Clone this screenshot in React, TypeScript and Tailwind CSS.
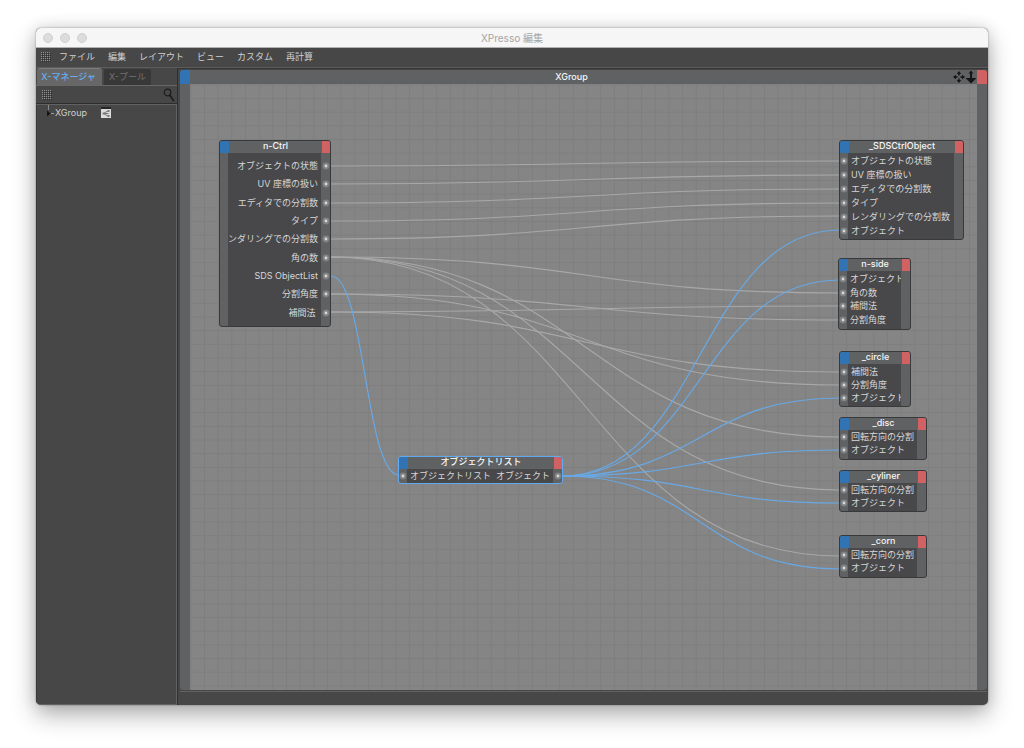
import React from 'react';
import { clsx } from 'clsx';

interface Port {
  label: string;
  side: 'in' | 'out';
}

interface GraphNode {
  id: string;
  title: string;
  place: string;
  rows: Port[][];
  rowsClass: string;
  selected?: boolean;
}

const input = (label: string): Port[] => [{ label, side: 'in' }];
const output = (label: string): Port[] => [{ label, side: 'out' }];

const MENU = ['ファイル', '編集', 'レイアウト', 'ビュー', 'カスタム', '再計算'];

const NODES: GraphNode[] = [
  {
    id: 'ctrl',
    title: 'n-Ctrl',
    place: 'left-[39px] top-[70px] w-[112px] h-[187px]',
    rowsClass: 'py-1',
    rows: [
      'オブジェクトの状態',
      'UV 座標の扱い',
      'エディタでの分割数',
      'タイプ',
      'レンダリングでの分割数',
      '角の数',
      'SDS ObjectList',
      '分割角度',
      '補間法 ',
    ].map(output),
  },
  {
    id: 'list',
    title: 'オブジェクトリスト',
    place: 'left-[218px] top-[386px] w-[165px] h-[28px]',
    rowsClass: '',
    selected: true,
    rows: [[{ label: 'オブジェクトリスト', side: 'in' }, { label: 'オブジェクト', side: 'out' }]],
  },
  {
    id: 'sds',
    title: '_SDSCtrlObject',
    place: 'left-[659px] top-[70px] w-[125px] h-[100px]',
    rowsClass: 'py-px',
    rows: [
      'オブジェクトの状態',
      'UV 座標の扱い',
      'エディタでの分割数',
      'タイプ',
      'レンダリングでの分割数',
      'オブジェクト',
    ].map(input),
  },
  {
    id: 'nside',
    title: 'n-side',
    place: 'left-[658px] top-[188px] w-[73px] h-[72px]',
    rowsClass: 'pt-px pb-0.5',
    rows: ['オブジェクト', '角の数', '補間法', '分割角度'].map(input),
  },
  {
    id: 'circle',
    title: '_circle',
    place: 'left-[659px] top-[281px] w-[72px] h-[56px]',
    rowsClass: 'py-px',
    rows: ['補間法', '分割角度', 'オブジェクト'].map(input),
  },
  {
    id: 'disc',
    title: '_disc',
    place: 'left-[659px] top-[347px] w-[88px] h-[43px]',
    rowsClass: 'pb-0.5',
    rows: ['回転方向の分割', 'オブジェクト'].map(input),
  },
  {
    id: 'cyliner',
    title: '_cyliner',
    place: 'left-[659px] top-[400px] w-[88px] h-[42px]',
    rowsClass: 'pb-0.5',
    rows: ['回転方向の分割', 'オブジェクト'].map(input),
  },
  {
    id: 'corn',
    title: '_corn',
    place: 'left-[659px] top-[465px] w-[88px] h-[43px]',
    rowsClass: 'pb-0.5',
    rows: ['回転方向の分割', 'オブジェクト'].map(input),
  },
];

// [x1, y1, x2, y2] in graph space
const WIRES: number[][] = [
  [151, 96, 660, 91],
  [151, 114, 660, 105],
  [151, 133, 660, 119],
  [151, 151, 660, 133],
  [151, 169, 660, 146],
  [151, 187, 660, 223],
  [151, 187, 660, 367],
  [151, 187, 660, 420],
  [151, 187, 660, 486],
  [151, 224, 660, 250],
  [151, 224, 660, 315],
  [151, 242, 660, 236],
  [151, 242, 660, 302],
];

const LINK_WIRES: number[][] = [
  [151, 206, 219, 405],
  [382, 406, 660, 160],
  [382, 406, 660, 210],
  [382, 406, 660, 328],
  [382, 406, 660, 380],
  [382, 406, 660, 433],
  [382, 406, 660, 499],
];

const wirePath = ([x1, y1, x2, y2]: number[]) => {
  const mid = (x1 + x2) / 2;
  return `M${x1} ${y1}C${mid} ${y1} ${mid} ${y2} ${x2} ${y2}`;
};

const Grip: React.FC = () => (
  <svg width="10" height="10" className="shrink-0" aria-hidden="true">
    <defs>
      <pattern id="grip" width="2" height="2" patternUnits="userSpaceOnUse">
        <rect width="1" height="1" fill="#929292" />
        <rect x="1" y="1" width="1" height="1" fill="#303030" />
      </pattern>
    </defs>
    <rect width="10" height="10" fill="url(#grip)" />
  </svg>
);

const PortDot: React.FC = () => (
  <svg width="8" height="8" className="shrink-0" aria-hidden="true">
    <circle cx="4" cy="4" r="3.4" fill="#808284" />
    <circle cx="4" cy="4" r="1.4" fill="#d8d8d8" />
  </svg>
);

const NodeCard: React.FC<{ node: GraphNode }> = ({ node }) => (
  <section
    className={clsx(
      'absolute flex flex-col overflow-hidden rounded-[3px] border bg-[#5f6163]',
      node.selected ? 'border-[#62aaf0]' : 'border-[#37393a]',
      node.place
    )}
  >
    <header className="flex h-3 shrink-0">
      <span className="w-[9px] bg-[#3273b4]" />
      <h2 className="flex-1 text-center text-[9px] leading-[10px] font-medium whitespace-nowrap text-[#f6f6f6]">
        {node.title}
      </h2>
      <span className="w-2 bg-[#d06264]" />
    </header>
    <div className="grid min-h-0 flex-1 grid-cols-[8px_1fr_9px]">
      <div className={clsx('flex flex-col', node.rowsClass)}>
        {node.rows.map((ports, i) => (
          <span key={i} className="flex flex-1 items-center justify-center">
            {ports[0].side === 'in' && <PortDot />}
          </span>
        ))}
      </div>
      <ul className={clsx('flex min-w-0 flex-col overflow-hidden bg-[#48484a]', node.rowsClass)}>
        {node.rows.map((ports, i) => (
          <li
            key={i}
            className={clsx(
              'flex min-h-0 flex-1 items-center px-[3px] text-[9px] leading-3 whitespace-pre text-[#d6d6d6]',
              ports.length > 1 ? 'justify-between' : ports[0].side === 'out' && 'justify-end'
            )}
          >
            {ports.map((port) => (
              <span key={port.label}>{port.label}</span>
            ))}
          </li>
        ))}
      </ul>
      <div className={clsx('flex flex-col', node.rowsClass)}>
        {node.rows.map((ports, i) => (
          <span key={i} className="flex flex-1 items-center justify-center">
            {ports[ports.length - 1].side === 'out' && <PortDot />}
          </span>
        ))}
      </div>
    </div>
  </section>
);

const Sidebar: React.FC = () => (
  <aside className="flex w-[142px] shrink-0 flex-col border-r border-[#2f2f2f]">
    <div className="flex h-[17px] items-end gap-0.5 pl-px text-[9px]" role="tablist">
      <button
        role="tab"
        aria-selected="true"
        className="h-[17px] w-[65px] rounded-t-[3px] border-t border-[#7b7b7b] bg-[#676767] pr-0.5 font-medium whitespace-nowrap text-[#67aef2]"
      >
        X-マネージャ
      </button>
      <button
        role="tab"
        aria-selected="false"
        className="h-4 w-[47px] rounded-t-[2px] bg-[#383838] whitespace-nowrap text-[#727272]"
      >
        X-プール
      </button>
    </div>
    <div className="flex h-[19px] items-center justify-between border-t border-b border-t-[#686868] border-b-[#2d2d2d] pr-0.5 pl-1.5">
      <Grip />
      <button aria-label="検索">
        <svg width="12" height="14" viewBox="0 0 12 14" fill="none" stroke="#1d1d1d">
          <circle cx="4.5" cy="4.5" r="3.3" strokeWidth="1.2" />
          <path d="M6.8 7.2L10.5 12.5" strokeWidth="1.8" strokeLinecap="round" />
        </svg>
      </button>
    </div>
    <div className="flex-1 border-t border-r border-b border-l border-[#626262] border-l-[#3a3a3a]">
      <div className="flex h-4 items-center pl-2 text-[9px] text-[#d0d0d0]">
        <svg width="10" height="16" aria-hidden="true">
          <path d="M3.500 0V5" stroke="#8a8a8a" />
          <path d="M2 5.500L5.500 8.500L2 11.500Z" fill="#151515" />
          <path d="M6 8.500H9" stroke="#a0a0a0" />
        </svg>
        <span>XGroup</span>
        <svg width="11" height="12" className="ml-3.5" aria-hidden="true">
          <rect width="10" height="2" fill="#252525" />
          <rect y="2" width="10" height="9" fill="#dcdcdc" />
          <path d="M7.500 3.500L2.500 6.500L7.500 9.500M2.500 6.500H7.500" stroke="#777" fill="none" />
          <path d="M6.500 3H8.500V5H6.500ZM6.500 8H8.500V10H6.500ZM1.500 5.500H3.500V7.500H1.500Z" fill="#7b7b7b" />
        </svg>
      </div>
    </div>
  </aside>
);

const Graph: React.FC = () => (
  <main className="relative flex min-w-0 flex-1 flex-col overflow-hidden rounded-[3px]">
    <header className="flex h-3.5 shrink-0 bg-[#5f6163]">
      <span className="w-2.5 bg-[#3273b4]" />
      <h1 className="flex-1 text-center text-[9px] leading-[14px] font-medium text-[#f6f6f6]">XGroup</h1>
      <button aria-label="移動">
        <svg width="12" height="14" viewBox="0 0 12 14" fill="#161616">
          <path d="M6 1L8.200 4H6.700V5.500H5.300V4H3.800ZM6 13L3.800 10H5.300V8.500H6.700V10H8.200ZM0 7L3 4.800V6.300H4.500V7.700H3V9.200ZM12 7L9 9.200V7.700H7.500V6.300H9V4.800Z" />
        </svg>
      </button>
      <button aria-label="ズーム">
        <svg width="12" height="14" viewBox="0 0 12 14" fill="#161616">
          <path d="M6 0.500L8.500 3.500H7V8H11.500L6 13.500L0.500 8H5V3.500H3.500Z" />
        </svg>
      </button>
      <span className="w-2.5 bg-[#d06264]" />
    </header>
    <div className="flex flex-1 bg-[#5f6163] px-2.5">
      <svg className="h-auto w-full bg-[#858585]" aria-hidden="true">
        <defs>
          <pattern id="grid" x="14" y="14" width="13.66" height="13.66" patternUnits="userSpaceOnUse">
            <path d="M0.500 0V13.660M0 0.500H13.660" stroke="#7e7e7e" strokeWidth="1" />
          </pattern>
        </defs>
        <rect width="100%" height="100%" fill="url(#grid)" />
      </svg>
    </div>
    <svg className="pointer-events-none absolute inset-0 h-full w-full" fill="none" aria-hidden="true">
      {WIRES.map((wire) => (
        <path key={wire.join()} d={wirePath(wire)} stroke="#a8a8a8" strokeWidth="1.1" />
      ))}
      {LINK_WIRES.map((wire) => (
        <path key={wire.join()} d={wirePath(wire)} stroke="#68a9e6" strokeWidth="1.2" />
      ))}
    </svg>
    {NODES.map((node) => (
      <NodeCard key={node.id} node={node} />
    ))}
  </main>
);

const App: React.FC = () => {
  return (
    <div className="flex min-h-screen flex-col bg-white px-9 pt-7 pb-[43px] font-[Inter,'Noto_Sans_CJK_JP',sans-serif]">
      <div className="flex flex-1 flex-col overflow-hidden rounded-[5px] bg-[#474747] shadow-[0_10px_24px_rgba(0,0,0,0.3),0_0_16px_rgba(0,0,0,0.12),0_0_2px_rgba(0,0,0,0.4)]">
        <div className="grid h-5 shrink-0 grid-cols-[1fr_auto_1fr] items-center border-b border-[#b0b0b0] bg-[#f6f6f6] px-[7px]">
          <div className="flex gap-[7px]">
            <button aria-label="閉じる" className="size-2.5 rounded-full border border-[#cfcfcf] bg-[#dcdcdc]" />
            <button aria-label="しまう" className="size-2.5 rounded-full border border-[#cfcfcf] bg-[#dcdcdc]" />
            <button aria-label="拡大" className="size-2.5 rounded-full border border-[#cfcfcf] bg-[#dcdcdc]" />
          </div>
          <div className="text-[10px] leading-4 text-[#a5a5a5]">XPresso 編集</div>
        </div>

        <nav className="flex h-[19px] shrink-0 items-center gap-2 pb-px pl-[5px] text-[9px] leading-4 text-[#d0d0d0]">
          <Grip />
          <div className="flex gap-[13px]">
            {MENU.map((item) => (
              <button key={item}>{item}</button>
            ))}
          </div>
        </nav>

        <div className="flex flex-1 border-t border-[#5c5c5c]">
          <Sidebar />
          <div className="flex min-w-0 flex-1 flex-col border-t border-[#363636] pt-px pr-px pl-0.5">
            <Graph />
            <footer className="mt-px h-3.5 shrink-0 border-t border-[#626262]" />
          </div>
        </div>
      </div>
    </div>
  );
};

export default App;
